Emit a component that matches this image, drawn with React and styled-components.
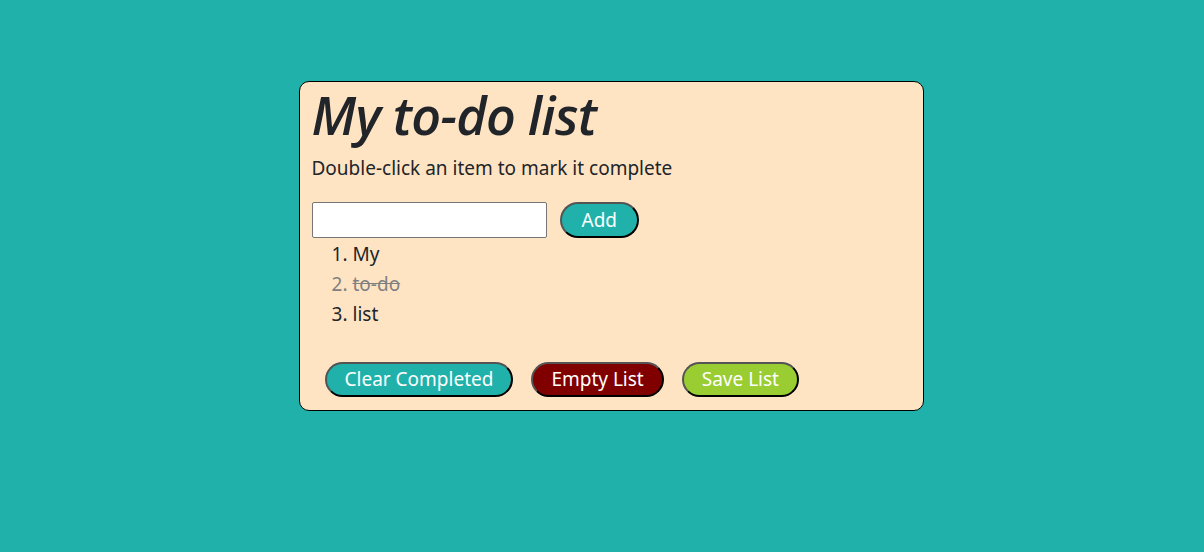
import React, { useState } from "react"
import styled, { createGlobalStyle } from "styled-components"

const GlobalStyle = createGlobalStyle`
  body {
    margin: 0;
    background: #20b2aa;
    font-family: "Segoe UI", "Noto Sans", sans-serif;
    color: #212529;
  }
`

const initialItems = [
  { id: 1, text: "My", done: false },
  { id: 2, text: "to-do", done: true },
  { id: 3, text: "list", done: false },
]

export default function App() {
  const [items, setItems] = useState(initialItems)
  const [draft, setDraft] = useState("")

  const toggle = (id) =>
    setItems(items.map((item) => (item.id == id ? { ...item, done: !item.done } : item)))

  const add = () => {
    if (!draft.trim()) return
    setItems([...items, { id: Date.now(), text: draft, done: false }])
    setDraft("")
  }

  return (
    <Page>
      <GlobalStyle />
      <Card>
        <Title>My to-do list</Title>
        <Hint>Double-click an item to mark it complete</Hint>
        <AddRow>
          <TextInput value={draft} onChange={(e) => setDraft(e.target.value)} />
          <PillButton color="#20b2aa" tall onClick={add}>Add</PillButton>
        </AddRow>
        <List>
          {items.map((item) => (
            <Item key={item.id} done={item.done} onDoubleClick={() => toggle(item.id)}>
              <ItemText done={item.done}>{item.text}</ItemText>
            </Item>
          ))}
        </List>
        <Actions>
          <PillButton color="#20b2aa" onClick={() => setItems(items.filter((i) => !i.done))}>
            Clear Completed
          </PillButton>
          <PillButton color="#800000" onClick={() => setItems([])}>Empty List</PillButton>
          <PillButton color="#9acd32">Save List</PillButton>
        </Actions>
      </Card>
    </Page>
  )
}

const Page = styled.div`
  display: flex;
  align-items: flex-start;
  justify-content: center;
  padding: 81px 0 0 18px;
  min-height: 552px;
  box-sizing: border-box;
`

const Card = styled.div`
  width: 625px;
  box-sizing: border-box;
  background: #ffe4c4;
  border: 1px solid #000;
  border-radius: 10px;
  padding: 0 12px 13px 12px;
`

const Title = styled.h1`
  margin: 2px 0 0;
  font-family: "Open Sans", "Noto Sans", sans-serif;
  font-size: 52px;
  font-style: italic;
  font-weight: 600;
  letter-spacing: -0.75px;
  line-height: 1.2;
`

const Hint = styled.p`
  margin: 8px 0 0;
  font-size: 19px;
  line-height: 1.5;
`

const AddRow = styled.div`
  display: flex;
  align-items: center;
  gap: 13px;
  margin-top: 19px;
`

const TextInput = styled.input`
  width: 235px;
  height: 36px;
  box-sizing: border-box;
  border: 1px solid #767676;
  border-radius: 2px;
  font-size: 18px;
  padding: 2px 6px;
`

const PillButton = styled.button`
  height: ${(p) => (p.tall ? "36px" : "35px")};
  box-sizing: border-box;
  padding: 0 ${(p) => (p.tall ? "20px" : "18px")};
  border: 2px outset #000;
  border-radius: 18px;
  background: ${(p) => p.color};
  color: #fff;
  font-family: inherit;
  font-size: 19px;
  cursor: pointer;
`

const List = styled.ol`
  margin: 1px 0 0;
  padding-left: 41px;
  font-size: 19px;
  line-height: 30px;
`

const Item = styled.li`
  color: ${(p) => (p.done ? "#808080" : "#212529")};
  user-select: none;
`

const ItemText = styled.span`
  text-decoration: ${(p) => (p.done ? "line-through" : "none")};
`

const Actions = styled.div`
  display: flex;
  gap: 18px;
  margin-top: 33px;
  padding-left: 13px;
`
